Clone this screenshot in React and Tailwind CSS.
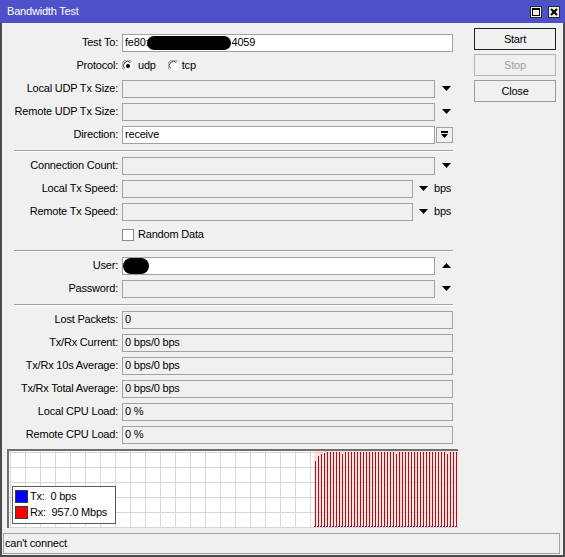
const Arrow = ({ up = false }) => (
  <svg width="9" height="5" viewBox="0 0 9 5">
    <polygon points={up ? '0,5 9,5 4.5,0' : '0,0 9,0 4.5,5'} fill="#000" />
  </svg>
)

const Row = ({ label, children }) => (
  <div className="h-[23px] flex items-center">
    <div className="w-[116px] text-right whitespace-nowrap">{label}</div>
    <div className="ml-[4px] flex items-center">{children}</div>
  </div>
)

const Field = ({ width, white = false, children }) => (
  <div
    className={`h-[18px] border border-[#a0a0a0] flex items-center px-[2px] overflow-hidden whitespace-nowrap ${white ? 'bg-white' : 'bg-[#f0f0f0]'}`}
    style={{ width }}
  >
    {children}
  </div>
)

const Separator = () => (
  <div className="h-[8px] pt-[4px] pl-[12px]">
    <div className="w-[439px] h-px bg-[#a0a0a0] shadow-[0_1px_0_#ffffff]" />
  </div>
)

const DropRow = ({ label, white = false, up = false, children }) => (
  <Row label={label}>
    <Field width={313} white={white}>{children}</Field>
    <div className="w-[22px] flex justify-center">
      <Arrow up={up} />
    </div>
  </Row>
)

const SpeedRow = ({ label }) => (
  <Row label={label}>
    <Field width={291} />
    <div className="ml-[6px]">
      <Arrow />
    </div>
    <span className="ml-[6px]">bps</span>
  </Row>
)

const Radio = ({ checked }) => (
  <svg width="12" height="12" viewBox="0 0 12 12">
    <circle cx="6" cy="6" r="5.5" fill="#fff" />
    <path d="M1.5 9.5 A5 5 0 0 1 9.5 1.5" fill="none" stroke="#808080" strokeWidth="1" />
    <path d="M2.6 8.4 A3.6 3.6 0 0 1 8.4 2.6" fill="none" stroke="#404040" strokeWidth="1" />
    <path d="M10.5 2.5 A5 5 0 0 1 2.5 10.5" fill="none" stroke="#e6e6e6" strokeWidth="1" />
    {checked && <circle cx="6" cy="6" r="2" fill="#000" />}
  </svg>
)

const Button = ({ label, tone = 'normal' }) => {
  const styles = {
    focus: 'border-[#1e1e1e] text-black',
    normal: 'border-[#9a9a9a] text-black',
    disabled: 'border-[#b4b4b4] text-[#a0a0a0]',
  }
  return (
    <div className={`w-[82px] h-[22px] border bg-[#f0f0f0] flex items-center justify-center ${styles[tone]}`}>
      {label}
    </div>
  )
}

// bar tops inside the plot, first few ramp up to full speed
const barTops = Array.from({ length: 48 }, (_, i) => {
  if (i === 0) return 10
  if (i === 1) return 5
  if (i === 2) return 3
  if (i === 3) return 2
  if (i === 9 || i === 27 || i === 44) return 3
  return 1
})

const Chart = () => (
  <div className="relative ml-[5px] mt-[3px] w-[451px] h-[79px] border-t-2 border-l-2 border-t-[#6e6e6e] border-l-[#6e6e6e] bg-white">
    <svg width="449" height="77" viewBox="0 0 449 77" className="block">
      {Array.from({ length: 30 }, (_, k) => (
        <line key={`v${k}`} x1={1.5 + 15 * k} y1="0" x2={1.5 + 15 * k} y2="77" stroke="#d6d6d6" />
      ))}
      {Array.from({ length: 6 }, (_, k) => (
        <line key={`h${k}`} x1="0" y1={1.5 + 15 * k} x2="449" y2={1.5 + 15 * k} stroke="#d6d6d6" />
      ))}
      <rect x="305" y="0" width="144" height="76" fill="#ffc8c8" opacity="0.55" />
      {barTops.map((top, i) => (
        <line key={i} x1={306.5 + 3 * i} y1={top} x2={306.5 + 3 * i} y2="76" stroke="#a51414" />
      ))}
      <line x1="305" y1="75.5" x2="449" y2="75.5" stroke="#4a2a90" strokeDasharray="1 2" />
    </svg>

    <div className="absolute left-[3px] top-[35px] w-[104px] h-[38px] border border-[#5a5a5a] bg-white pl-[2px] pt-[2px] flex flex-col gap-[1px]">
      <div className="h-[15px] flex items-center">
        <div className="w-[13px] h-[13px] bg-[#0000ff] border border-[#3a3a3a]" />
        <span className="ml-[2px] whitespace-pre">Tx:  0 bps</span>
      </div>
      <div className="h-[15px] flex items-center">
        <div className="w-[13px] h-[13px] bg-[#ff0000] border border-[#3a3a3a]" />
        <span className="ml-[2px] whitespace-pre">Rx:  957.0 Mbps</span>
      </div>
    </div>
  </div>
)

export default function App() {
  return (
    <div className="w-[565px] h-[557px] flex flex-col bg-[#f0f0f0] text-[11px] tracking-[-0.2px] text-black font-['Liberation_Sans',Arial,sans-serif] leading-none">
      <div className="h-[23px] shrink-0 bg-[#4f51c8] flex items-center pl-[7px] pr-[5px] text-white">
        <span className="flex-1">Bandwidth Test</span>
        <div className="flex gap-[6px]">
          <div className="w-[12px] h-[12px] bg-[#ececec] border border-[#2a2a2a] flex items-center justify-center">
            <div className="w-[8px] h-[8px] border border-black border-t-2" />
          </div>
          <div className="w-[12px] h-[12px] bg-[#ececec] border border-[#2a2a2a] flex items-center justify-center">
            <svg width="8" height="8" viewBox="0 0 8 8">
              <path d="M1 1 L7 7 M7 1 L1 7" stroke="#000" strokeWidth="2" />
            </svg>
          </div>
        </div>
      </div>

      <div className="flex-1 flex flex-col border-l-2 border-r-2 border-b-2 border-[#4c4c4c]">
        <div className="flex items-start">
          <div className="w-[460px] pt-[8px]">
            <Row label="Test To:">
              <Field width={331} white>
                <span>fe80:</span>
                <span className="inline-block w-[84px] h-[14px] rounded-full bg-black -ml-[1px]" />
                <span>4059</span>
              </Field>
            </Row>
            <Row label="Protocol:">
              <div className="flex items-center gap-[4px]">
                <Radio checked />
                <span>udp</span>
              </div>
              <div className="flex items-center gap-[2px] ml-[12px]">
                <Radio />
                <span>tcp</span>
              </div>
            </Row>
            <DropRow label="Local UDP Tx Size:" />
            <DropRow label="Remote UDP Tx Size:" />
            <Row label="Direction:">
              <Field width={313} white>receive</Field>
              <div className="ml-[1px] w-[17px] h-[16px] border border-[#a0a0a0] flex flex-col items-center justify-center gap-[1px]">
                <div className="w-[7px] h-[1.5px] bg-black" />
                <svg width="7" height="4" viewBox="0 0 7 4">
                  <polygon points="0,0 7,0 3.5,4" fill="#000" />
                </svg>
              </div>
            </Row>

            <Separator />

            <DropRow label="Connection Count:" />
            <SpeedRow label="Local Tx Speed:" />
            <SpeedRow label="Remote Tx Speed:" />
            <Row label="">
              <div className="w-[12px] h-[12px] bg-white border border-[#8a8a8a]" />
              <span className="ml-[4px]">Random Data</span>
            </Row>

            <Separator />

            <DropRow label="User:" white up>
              <span className="inline-block w-[26px] h-[16px] rounded-full bg-black -ml-[2px]" />
            </DropRow>
            <DropRow label="Password:" />

            <Separator />

            <Row label="Lost Packets:"><Field width={331}>0</Field></Row>
            <Row label="Tx/Rx Current:"><Field width={331}>0 bps/0 bps</Field></Row>
            <Row label="Tx/Rx 10s Average:"><Field width={331}>0 bps/0 bps</Field></Row>
            <Row label="Tx/Rx Total Average:"><Field width={331}>0 bps/0 bps</Field></Row>
            <Row label="Local CPU Load:"><Field width={331}>0 %</Field></Row>
            <Row label="Remote CPU Load:"><Field width={331}>0 %</Field></Row>
          </div>

          <div className="ml-[12px] pt-[5px] flex flex-col gap-[4px]">
            <Button label="Start" tone="focus" />
            <Button label="Stop" tone="disabled" />
            <Button label="Close" />
          </div>
        </div>

        <Chart />

        <div className="ml-[1px] mr-[3px] mt-[5px] h-[21px] border border-[#a0a0a0] flex items-center pl-[1px]">
          can't connect
        </div>
      </div>
    </div>
  )
}
